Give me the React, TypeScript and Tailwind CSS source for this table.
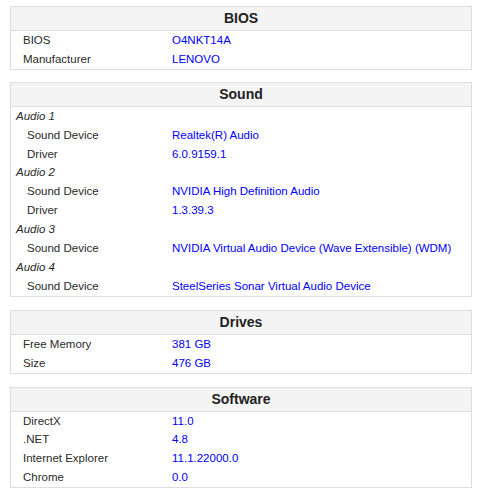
import React from "react";

type Row = { kind: "group"; label: string } | { kind: "item"; label: string; value: string; indent?: boolean };

const sections: { title: string; rows: Row[]; rowH: string; mb: string }[] = [
  {
    title: "BIOS",
    rowH: "h-[19px]",
    mb: "mb-[12px]",
    rows: [
      { kind: "item", label: "BIOS", value: "O4NKT14A" },
      { kind: "item", label: "Manufacturer", value: "LENOVO" },
    ],
  },
  {
    title: "Sound",
    rowH: "h-[18.9px]",
    mb: "mb-[13px]",
    rows: [
      { kind: "group", label: "Audio 1" },
      { kind: "item", label: "Sound Device", value: "Realtek(R) Audio", indent: true },
      { kind: "item", label: "Driver", value: "6.0.9159.1", indent: true },
      { kind: "group", label: "Audio 2" },
      { kind: "item", label: "Sound Device", value: "NVIDIA High Definition Audio", indent: true },
      { kind: "item", label: "Driver", value: "1.3.39.3", indent: true },
      { kind: "group", label: "Audio 3" },
      { kind: "item", label: "Sound Device", value: "NVIDIA Virtual Audio Device (Wave Extensible) (WDM)", indent: true },
      { kind: "group", label: "Audio 4" },
      { kind: "item", label: "Sound Device", value: "SteelSeries Sonar Virtual Audio Device", indent: true },
    ],
  },
  {
    title: "Drives",
    rowH: "h-[19px]",
    mb: "mb-[13px]",
    rows: [
      { kind: "item", label: "Free Memory", value: "381 GB" },
      { kind: "item", label: "Size", value: "476 GB" },
    ],
  },
  {
    title: "Software",
    rowH: "h-[18.75px]",
    mb: "mb-[6px]",
    rows: [
      { kind: "item", label: "DirectX", value: "11.0" },
      { kind: "item", label: ".NET", value: "4.8" },
      { kind: "item", label: "Internet Explorer", value: "11.1.22000.0" },
      { kind: "item", label: "Chrome", value: "0.0" },
    ],
  },
];

export default function App() {
  return (
    <div
      className="min-h-[494px] w-[477px] bg-white pt-[6px] pl-[10px]"
      style={{ fontFamily: '"Liberation Sans", Arial, sans-serif' }}
    >
      {sections.map((s) => (
        <div key={s.title} className={`${s.mb} w-[462px] border border-[#dddddd]`}>
          <div className="h-[24px] border-b border-[#dddddd] bg-[#f4f4f4] text-center text-[14px] font-bold leading-[23px] text-[#222222]">
            {s.title}
          </div>
          <div className="flex flex-col">
            {s.rows.map((r, i) =>
              r.kind === "group" ? (
                <div key={i} className={`flex ${s.rowH} items-center pl-[5px] text-[11.5px] italic text-[#2a2a2a]`}>
                  {r.label}
                </div>
              ) : (
                <div key={i} className={`flex ${s.rowH} items-center text-[11.5px]`}>
                  <div className={`w-[161px] shrink-0 text-[#2a2a2a] ${r.indent ? "pl-[16px]" : "pl-[12px]"}`}>
                    {r.label}
                  </div>
                  <div className="text-[#0000ff]">{r.value}</div>
                </div>
              )
            )}
          </div>
        </div>
      ))}
    </div>
  );
}
